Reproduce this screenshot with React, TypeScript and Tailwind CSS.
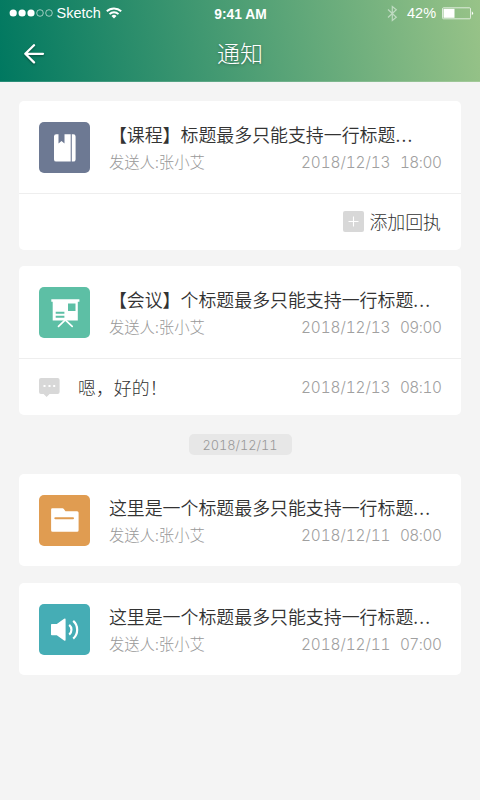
import React from 'react';

const dateFont = "font-['Inter','Noto_Sans_CJK_SC',sans-serif] tabular-nums";

const BookIcon: React.FC = () => (
  <svg width="51" height="51" viewBox="0 0 51 51" fill="#fff">
    <path d="M17.200 12.200h2.300v9.400l3-2.600 3 2.600v-9.400h6.200v27.400H17.200a2.200 2.200 0 0 1-2.200-2.200V14.400a2.200 2.200 0 0 1 2.200-2.200z" />
    <path d="M32.800 12.200h1.600a2.200 2.200 0 0 1 2.200 2.200v23a2.200 2.200 0 0 1-2.200 2.200h-1.600z" />
  </svg>
);

const BoardIcon: React.FC = () => (
  <svg width="51" height="51" viewBox="0 0 51 51" fill="none">
    <path d="M12.300 12.200h28.100v2.600h-1.600v18.800H13.700V14.800h-1.400z" fill="#fff" />
    <path d="M29 16.500h7.500v7.500H29zM16.700 24.800h8.700v2H16.700zM16.700 28.800h8.700v2H16.700z" fill="#5dbfa5" />
    <path d="M25.500 33.600l-6 5.700M27 33.600l6.200 5.700" stroke="#fff" strokeWidth="1.700" strokeLinecap="round" />
  </svg>
);

const FolderIcon: React.FC = () => (
  <svg width="51" height="51" viewBox="0 0 51 51">
    <path d="M13.300 13.300h10.300q.7 0 1.200.6l1.700 2.300h11.600a1.500 1.500 0 0 1 1.500 1.500v17.600a1.500 1.500 0 0 1-1.500 1.500H13.600a1.500 1.500 0 0 1-1.500-1.500V14.500a1.200 1.200 0 0 1 1.200-1.200z" fill="#fff" />
    <path d="M16.300 23.200h17.700" stroke="#e09c51" strokeWidth="2" strokeLinecap="round" />
  </svg>
);

const SpeakerIcon: React.FC = () => (
  <svg width="51" height="51" viewBox="0 0 51 51" fill="none">
    <path d="M12.800 20h5l7.300-5.200q1.500-.8 1.500.6v20.400q0 1.500-1.500.6l-7.300-5.200h-5q-.8 0-.8-.8v-9.600q0-.8.800-.8z" fill="#fff" />
    <path d="M30.200 20.900c3 2.500 3 7.300 0 9.800M34.200 16.800c5.300 4.600 5.300 13.200 0 17.800" stroke="#fff" strokeWidth="2.200" />
  </svg>
);

interface Notice {
  title: string;
  date: string;
  time: string;
  color: string;
  icon: React.ReactNode;
}

const notices: Notice[] = [
  { title: '【课程】标题最多只能支持一行标题', date: '2018/12/13', time: '18:00', color: 'bg-[#6d7993]', icon: <BookIcon /> },
  { title: '【会议】个标题最多只能支持一行标题', date: '2018/12/13', time: '09:00', color: 'bg-[#5dbfa5]', icon: <BoardIcon /> },
  { title: '这里是一个标题最多只能支持一行标题', date: '2018/12/11', time: '08:00', color: 'bg-[#e09c51]', icon: <FolderIcon /> },
  { title: '这里是一个标题最多只能支持一行标题', date: '2018/12/11', time: '07:00', color: 'bg-[#45adb5]', icon: <SpeakerIcon /> },
];

const DateTime: React.FC<{ date: string; time: string }> = ({ date, time }) => (
  <span className={`${dateFont} flex w-[140.500px] justify-between whitespace-nowrap text-[15.36px] font-light text-[#a0a0a0]`}>
    <span className="tracking-[-0.08px]">{date}</span>
    <span className="tracking-[-0.45px]">{time}</span>
  </span>
);

const NoticeRow: React.FC<{ notice: Notice }> = ({ notice }) => (
  <div className="flex h-[92px] pt-5 pr-[19.500px] pl-[19.600px]">
    <div className={`mt-[.5px] h-[51px] w-[51px] shrink-0 overflow-hidden rounded-[5px] ${notice.color}`}>{notice.icon}</div>
    <div className="ml-[19.300px] min-w-0 flex-1">
      <h2 className="h-[27px] whitespace-nowrap text-[17.92px] leading-[27px] font-[350] text-[#333]">
        {notice.title}
        <span className="tracking-[1.2px]">...</span>
      </h2>
      <div className="flex h-[29px] items-center justify-between">
        <span className="-mt-px whitespace-nowrap text-[15.36px] font-light text-[#999]">发送人:张小艾</span>
        <DateTime date={notice.date} time={notice.time} />
      </div>
    </div>
  </div>
);

const StatusBar: React.FC = () => (
  <div className="flex h-[27px] items-center justify-between pr-[6px] pl-[9px] font-['Liberation_Sans',sans-serif] text-[14.5px] text-white">
    <div className="flex w-[180px] items-center">
      <svg width="44" height="9" viewBox="0 0 44 9" fill="#fff">
        <circle cx="4.200" cy="4" r="3.600" />
        <circle cx="13.100" cy="4" r="3.600" />
        <circle cx="22" cy="4" r="3.600" />
        <g fill="none" stroke="#fff" strokeWidth=".6">
          <circle cx="31" cy="4" r="3.300" />
          <circle cx="40" cy="4" r="3.300" />
        </g>
      </svg>
      <span className="ml-[3.500px] w-[44px]">Sketch</span>
      <svg className="-mt-px ml-[5.500px]" width="16" height="12" viewBox="0 0 16 12" fill="none" stroke="#fff" strokeWidth="1.900">
        <path d="M.8 4.300a10.500 10.500 0 0 1 14.400 0M3.500 7.100a6.500 6.500 0 0 1 9 0" />
        <path d="M8 11.500L5.500 9a3.600 3.600 0 0 1 5 0z" fill="#fff" stroke="none" />
      </svg>
    </div>
    <span className="mt-[3px] mr-[2px] text-[13.800px] font-bold">9:41 AM</span>
    <div className="flex w-[180px] items-center justify-end">
      <svg width="11" height="17" viewBox="0 0 11 17" fill="none" stroke="#fff" strokeOpacity=".5" strokeWidth="1.200">
        <path d="M1 4.500l8.300 7.700L5.300 15.500v-14l4 3.300L1 12.500" />
      </svg>
      <span className="ml-[9px] w-[30px]">42%</span>
      <svg className="ml-[5px]" width="32" height="13" viewBox="0 0 32 13">
        <rect x=".5" y=".8" width="28" height="11" rx="1" fill="none" stroke="#fff" strokeOpacity=".7" />
        <rect x="1.500" y="1.800" width="11" height="9" fill="#fff" />
        <path d="M29.800 4.300q2.600 2 0 4z" fill="#fff" />
      </svg>
    </div>
  </div>
);

const App: React.FC = () => {
  return (
    <div className="h-[800px] w-[480px] overflow-hidden bg-[#f4f4f4] font-['Noto_Sans_CJK_SC',sans-serif]">
      <header className="h-[82px] border-b border-white/15 bg-[linear-gradient(80deg,#007860_0%,#98c388_100%)] bg-origin-border">
        <StatusBar />
        <div className="flex h-[54px] items-center pr-[45px] pl-6">
          <svg className="drop-shadow-[0_1px_1px_rgba(0,0,0,0.4)]" width="21" height="20" viewBox="0 0 21 20" fill="none" stroke="#fff" strokeWidth="2.300" strokeLinecap="round" strokeLinejoin="round">
            <path d="M10 1.200L1.300 9.800l8.700 8.600M1.300 9.800h17.700" />
          </svg>
          <h1 className="-mt-[3px] flex-1 text-center text-[23.04px] leading-[51px] font-light text-white [text-shadow:0_1px_3px_rgba(0,0,0,0.35)]">通知</h1>
        </div>
      </header>

      <main className="flex flex-col px-[19px] pt-[19px]">
        <section className="rounded-[5px] bg-white">
          <NoticeRow notice={notices[0]} />
          <div className="flex h-[57px] items-center justify-end border-t border-[#eee] pr-[20px]">
            <svg className="-mt-px" width="21" height="21" viewBox="0 0 21 21">
              <rect width="21" height="21" rx="2" fill="#d8d8d8" />
              <path d="M5.500 10.500h10M10.500 5.500v10" stroke="#fff" strokeWidth="1.100" />
            </svg>
            <span className="-mt-[2px] ml-[5px] text-[17.92px] font-light text-[#333]">添加回执</span>
          </div>
        </section>

        <section className="mt-4 rounded-[5px] bg-white">
          <NoticeRow notice={notices[1]} />
          <div className="flex h-[57px] items-center border-t border-[#eee] pr-[19.500px] pl-[19.600px]">
            <svg width="21" height="20" viewBox="0 0 21 20">
              <path d="M2 1h16.600a2 2 0 0 1 2 2v12a2 2 0 0 1-2 2h-8l-3 3-3-3H2a2 2 0 0 1-2-2V3a2 2 0 0 1 2-2z" fill="#d8d8d8" />
              <path d="M4.500 8h2v2h-2zM9.500 8h2v2h-2zM14.200 8h2v2h-2z" fill="#fff" />
            </svg>
            <span className="ml-[18.400px] flex-1 text-[17.92px] font-light text-[#333]">嗯，好的！</span>
            <div className="pt-[2px]">
              <DateTime date="2018/12/13" time="08:10" />
            </div>
          </div>
        </section>

        <div className={`${dateFont} mx-auto mt-[19px] flex h-[21px] w-[103px] items-center justify-center rounded-[5px] bg-[#e7e7e7] pt-[2px] text-[12.800px] font-light text-[#999]`}>
          2018/12/11
        </div>

        <section className="mt-[19px] rounded-[5px] bg-white">
          <NoticeRow notice={notices[2]} />
        </section>

        <section className="mt-[17px] rounded-[5px] bg-white">
          <NoticeRow notice={notices[3]} />
        </section>
      </main>
    </div>
  );
};

export default App;
